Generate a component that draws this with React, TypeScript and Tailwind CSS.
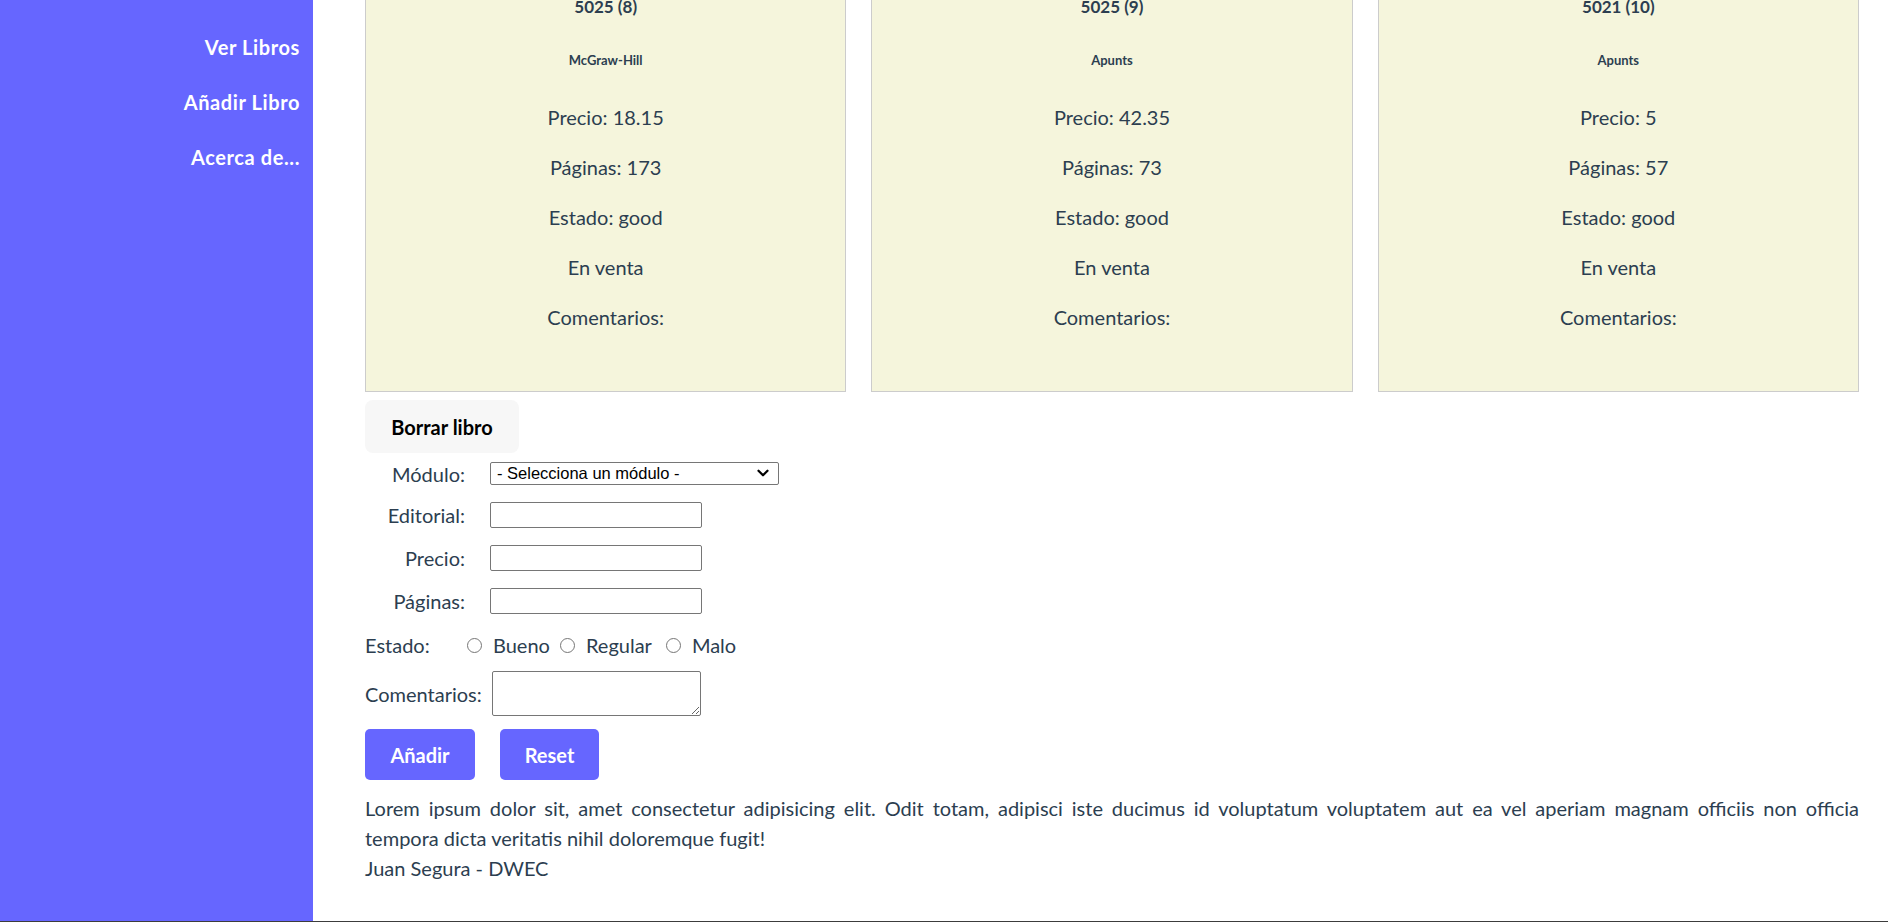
import { ChevronDown } from "lucide-react";

const books = [
  { id: "5025 (8)", publisher: "McGraw-Hill", price: "18.15", pages: 173, status: "good" },
  { id: "5025 (9)", publisher: "Apunts", price: "42.35", pages: 73, status: "good" },
  { id: "5021 (10)", publisher: "Apunts", price: "5", pages: 57, status: "good" },
];

const navLinks = ["Ver Libros", "Añadir Libro", "Acerca de..."];

function BookCard({ book }: { book: (typeof books)[number] }) {
  return (
    <div className="flex flex-col items-center text-center border border-[#cccccc] bg-[#f5f5dc] pt-[25px] pb-[59px]">
      <h5 className="text-[17px] font-bold leading-[22px]">{book.id}</h5>
      <h6 className="mt-[33px] text-[13px] font-bold leading-[18px]">{book.publisher}</h6>
      <p className="mt-[33px] text-[20px] leading-[30px]">Precio: {book.price}</p>
      <p className="mt-[20px] text-[20px] leading-[30px]">Páginas: {book.pages}</p>
      <p className="mt-[20px] text-[20px] leading-[30px]">Estado: {book.status}</p>
      <p className="mt-[20px] text-[20px] leading-[30px]">En venta</p>
      <p className="mt-[20px] text-[20px] leading-[30px]">Comentarios:</p>
    </div>
  );
}

function Radio({ label, className }: { label: string; className?: string }) {
  return (
    <label className={`flex items-center ${className ?? ""}`}>
      <input
        type="radio"
        name="estado"
        className="appearance-none w-[15px] h-[15px] rounded-full border border-[#767676] bg-white"
      />
      <span className="ml-[11px]">{label}</span>
    </label>
  );
}

export default function App() {
  return (
    <div className="h-[922px] flex flex-col overflow-hidden bg-white text-[#2c3e50] font-['Lato',sans-serif]">
      <div className="flex flex-1 min-h-0">
        {/* Sidebar */}
        <aside className="w-[313px] shrink-0 bg-[#6666ff] flex flex-col items-end pr-[13px] pt-[32px] gap-[25px]">
          {navLinks.map((l) => (
            <a key={l} href="#" className="text-white font-bold text-[20px] leading-[30px] tracking-[0.6px]">
              {l}
            </a>
          ))}
        </aside>

        {/* Main (scrolled) */}
        <main className="flex-1 min-w-0 overflow-hidden pl-[52px] pr-[29px]">
          <div className="-mt-[30px]">
            <div className="grid grid-cols-3 gap-[25px]">
              {books.map((b) => (
                <BookCard key={b.id} book={b} />
              ))}
            </div>

            <button className="block mt-[8px] w-[154px] h-[53px] rounded-[8px] bg-[#f7f7f7] text-black font-bold text-[20px]">
              Borrar libro
            </button>

            <form className="flex flex-col text-[20px] leading-[30px]">
              <div className="mt-[9px] h-[23px] flex items-center">
                <span className="w-[100px] mr-[25px] text-right">Módulo:</span>
                <div className="relative w-[289px] h-[23px]">
                  <select className="block appearance-none w-full h-full border border-[#767676] rounded-[2px] bg-white pl-[6px] text-black text-[16.5px] leading-[21px] font-['Liberation_Sans',Arial,sans-serif]">
                    <option>- Selecciona un módulo -</option>
                  </select>
                  <ChevronDown
                    className="absolute right-[7px] top-[2px] w-[18px] h-[18px] text-black pointer-events-none"
                    strokeWidth={3}
                  />
                </div>
              </div>

              {["Editorial:", "Precio:", "Páginas:"].map((l, i) => (
                <div
                  key={l}
                  className={`h-[26px] flex items-center ${i === 0 ? "mt-[17px]" : i === 1 ? "mt-[17px]" : "mt-[17px]"}`}
                >
                  <span className="w-[100px] mr-[25px] text-right">{l}</span>
                  <input
                    type="text"
                    className="block w-[212px] h-[26px] border border-[#767676] rounded-[2px] bg-white"
                  />
                </div>
              ))}

              <div className="mt-[16px] h-[30px] flex items-center">
                <span className="w-[102px]">Estado:</span>
                <Radio label="Bueno" />
                <Radio label="Regular" className="ml-[10px]" />
                <Radio label="Malo" className="ml-[14px]" />
              </div>

              <div className="mt-[11px] flex items-center">
                <span>Comentarios:</span>
                <textarea className="block ml-[10px] w-[209px] h-[45px] border border-[#767676] rounded-[2px] bg-white resize" />
              </div>

              <div className="mt-[13px] flex gap-[25px]">
                <button type="button" className="w-[110px] h-[51px] rounded-[5px] bg-[#6666ff] text-white font-bold">
                  Añadir
                </button>
                <button type="reset" className="w-[99px] h-[51px] rounded-[5px] bg-[#6666ff] text-white font-bold">
                  Reset
                </button>
              </div>
            </form>

            <p className="mt-[13px] text-[20px] leading-[30px]">
              <span className="block text-justify [text-align-last:justify]">
                Lorem ipsum dolor sit, amet consectetur adipisicing elit. Odit totam, adipisci iste ducimus id
                voluptatum voluptatem aut ea vel aperiam magnam officiis non officia
              </span>
              <span className="block">tempora dicta veritatis nihil doloremque fugit!</span>
            </p>
            <p className="text-[20px] leading-[30px]">Juan Segura - DWEC</p>
          </div>
        </main>
      </div>
      <div className="h-px shrink-0 bg-[#3c3c3c]" />
    </div>
  );
}
